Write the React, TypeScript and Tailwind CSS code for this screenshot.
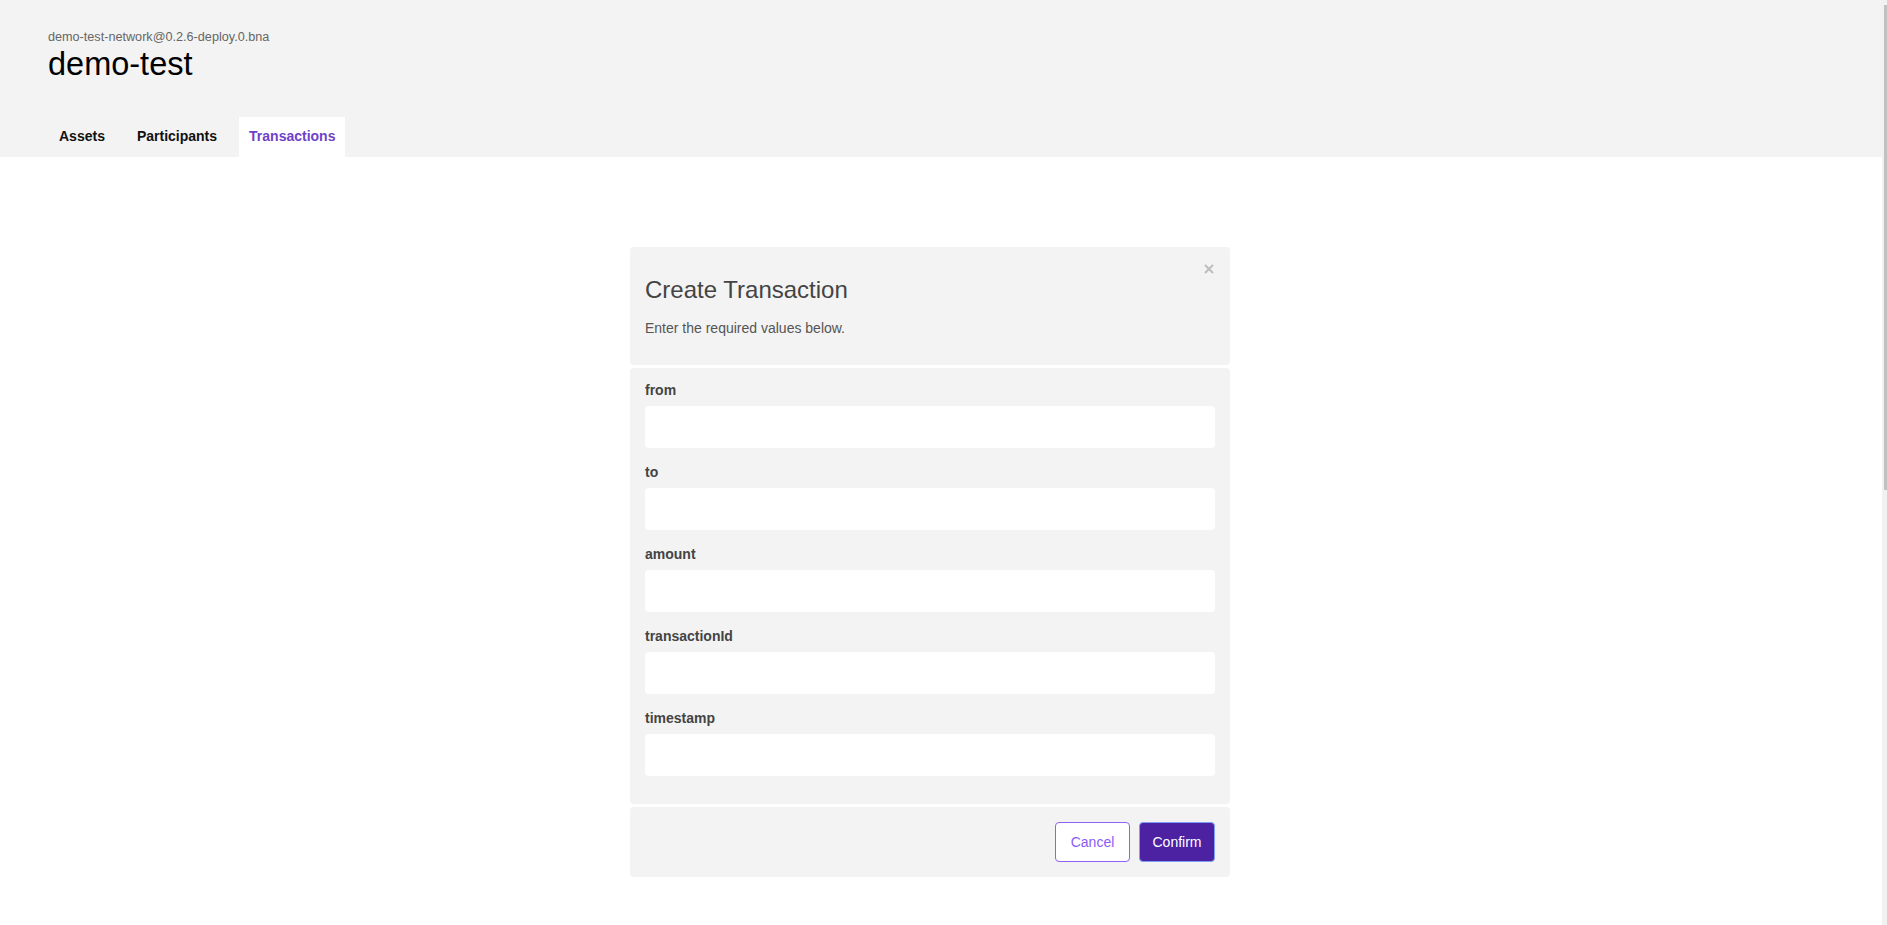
import React from "react";

const fields = ["from", "to", "amount", "transactionId", "timestamp"];

export default function App() {
  return (
    <div className="h-screen flex overflow-hidden bg-white font-['Liberation_Sans',Arial,sans-serif]">
      <div className="flex-1 min-w-0">
        <header className="bg-[#f3f3f3] h-[157px] pt-[29px] px-[48px] flex flex-col">
          <div className="text-[12.65px] leading-[16px] text-[#666]">demo-test-network@0.2.6-deploy.0.bna</div>
          <h1 className="text-[32.5px] leading-[38px] text-black">demo-test</h1>
          <nav className="mt-auto ml-[1px] flex gap-[12px] h-[40px]">
            <div className="px-[10px] pb-[2px] flex items-center text-[14px] font-bold text-[#111]">Assets</div>
            <div className="px-[10px] pb-[2px] flex items-center text-[14px] font-bold text-[#111]">Participants</div>
            <div className="px-[10px] pb-[2px] flex items-center text-[14px] font-bold text-[#6f42c9] bg-white">Transactions</div>
          </nav>
        </header>

        <main className="flex justify-center pr-[22px] pt-[90px]">
          <div className="w-[600px] flex flex-col gap-[3px]">
            <section className="relative bg-[#f3f3f3] rounded-[4px] h-[118px] px-[15px] pt-[28px]">
              <h2 className="text-[24px] leading-[30px] text-[#444]">Create Transaction</h2>
              <p className="mt-[13px] text-[14px] leading-[20px] text-[#555]">Enter the required values below.</p>
              <button className="absolute top-[17px] right-[16px] w-[10px] h-[10px] flex items-center justify-center" aria-label="close">
                <svg width="10" height="10" viewBox="0 0 10 10">
                  <path d="M1 1L9 9M9 1L1 9" stroke="#bdbdbd" strokeWidth="2" />
                </svg>
              </button>
            </section>

            <section className="bg-[#f3f3f3] rounded-[4px] px-[15px] pt-[11px] pb-[28px] flex flex-col gap-[13px]">
              {fields.map((f) => (
                <div key={f} className="flex flex-col">
                  <label className="pt-[1px] text-[14px] leading-[20px] font-bold text-[#444]">{f}</label>
                  <input className="mt-[6px] h-[42px] rounded-[4px] bg-white outline-none px-[10px] text-[14px]" />
                </div>
              ))}
            </section>

            <section className="bg-[#f3f3f3] rounded-[4px] h-[70px] pt-[15px] pr-[15px] flex justify-end items-start gap-[9px]">
              <button className="w-[75px] h-[40px] rounded-[4px] bg-white border border-[#9061f9] text-[#8b5cf6] text-[14px]">Cancel</button>
              <button className="w-[76px] h-[40px] rounded-[4px] bg-[#4c22a3] border border-[#7f9ef5] text-white text-[14px]">Confirm</button>
            </section>
          </div>
        </main>
      </div>
      <div className="w-[5px] shrink-0 bg-[#f1f1f1] pt-[5px] pl-[2px]">
        <div className="h-[485px] bg-[#c1c1c1]" />
      </div>
    </div>
  );
}
